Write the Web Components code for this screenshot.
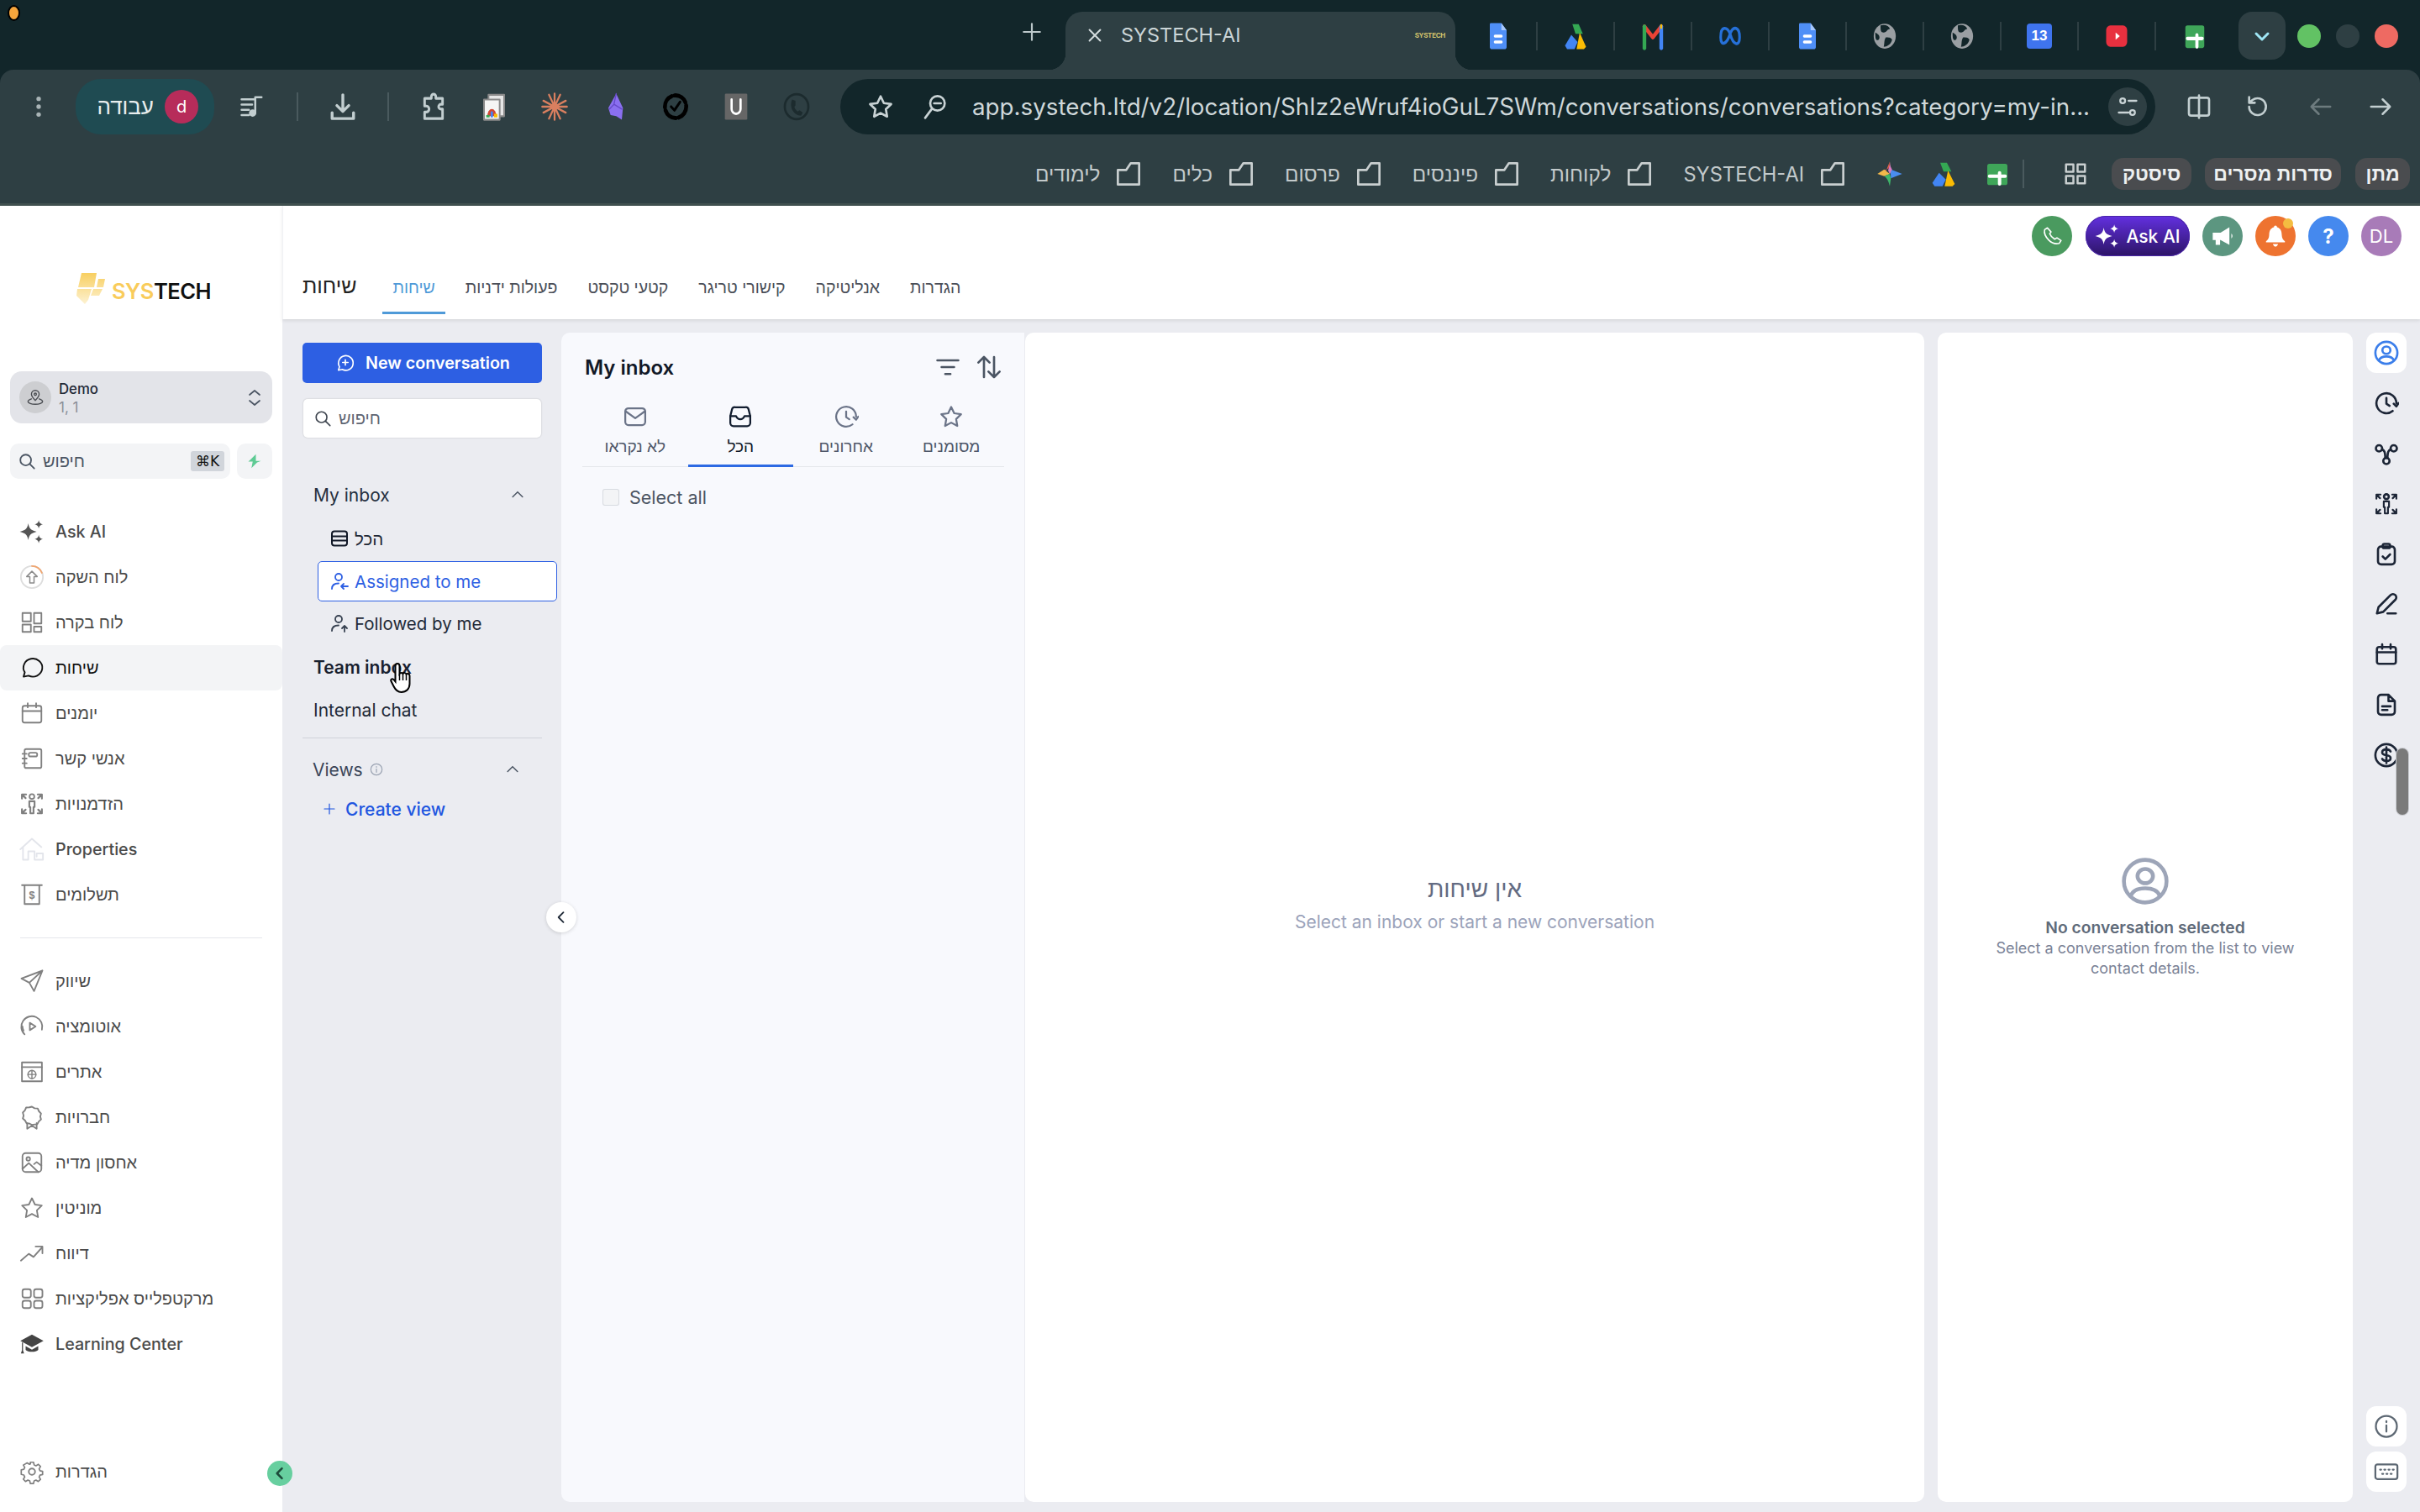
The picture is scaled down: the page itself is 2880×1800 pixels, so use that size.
<!DOCTYPE html>
<html lang="he">
<head>
<meta charset="utf-8">
<title>SYSTECH-AI</title>
<style>
	html, body { margin: 0; padding: 0; width: 2880px; height: 1800px; overflow: hidden; background: #ebecf1; }
	body { font-family: Inter, "Liberation Sans", sans-serif; display: flex; flex-direction: column; }
</style>
</head>
<body>
<browser-chrome></browser-chrome>
<app-shell></app-shell>
<script>
const ICONS = {
	sparkle: `<g fill="currentColor" stroke="none"><path d="M8.500 4C9.400 9 11 10.600 16.500 12 11 13.400 9.400 15 8.500 20 7.600 15 6 13.400.5 12 6 10.600 7.600 9 8.500 4Z"/><path d="M18.500 1C19 3.500 19.700 4.200 22.500 5 19.700 5.800 19 6.500 18.500 9 18 6.500 17.300 5.800 14.500 5 17.300 4.200 18 3.500 18.500 1Z"/><path d="M18.500 15C19 17.500 19.700 18.200 22.500 19 19.700 19.800 19 20.500 18.500 23 18 20.500 17.300 19.800 14.500 19 17.300 18.200 18 17.500 18.500 15Z"/></g>`,
	launch: `<circle cx="12" cy="12" r="10.500" stroke="#ddd"/><path d="M12 1.500A10.500 10.500 0 0 1 21.500 8" stroke="#f0a56f"/><path d="M12 6.500 7 11.500h3v6h4v-6h3z" stroke-width="1.200"/>`,
	dashboard: `<rect x="3" y="3" width="8" height="8"/><rect x="14" y="3" width="7" height="10"/><rect x="3" y="14" width="8" height="7"/><rect x="14" y="16" width="7" height="5"/>`,
	chat: `<path d="M4 20.500 5.200 16.300A9 8.600 0 1 1 8.800 19.500Z"/>`,
	calendar: `<rect x="3" y="5" width="18" height="16" rx="2"/><path d="M3 10h18M8 2.500v4M16 2.500v4"/>`,
	book: `<rect x="5" y="3" width="16" height="18" rx="1.500"/><rect x="9" y="6.500" width="8" height="3.500" rx="1.500"/><path d="M3 7.500h4M3 12h4M3 16.500h4"/>`,
	opps: `<circle cx="12" cy="5" r="2.300"/><path d="M9.500 9.500h5v5.500h-1V21h-3v-6h-1zM2.500 3v4M2.500 3h4M21.500 3v4M21.500 3h-4M2.500 21v-4M2.500 21h4M21.500 21v-4M21.500 21h-4M3 3.500l3 3M21 3.500l-3 3M3 20.500l3-3M21 20.500l-3-3" stroke-width="1.700"/>`,
	house: `<path d="M1 12 12 2l9 8M3.500 10v12h5v-8h6v8h8v-6h-6v3" stroke="#e3e5eb"/>`,
	bill: `<path d="M2.500 3h19M5 3v18h14V3"/><text x="12" y="16" font-size="10" font-weight="700" text-anchor="middle" fill="currentColor" stroke="none" font-family="Liberation Sans">$</text>`,
	send: `<path d="M22 2 2 9.500l7.500 4L14 21.500zM22 2 9.500 13.500"/>`,
	play: `<path d="M5 19.500A10 10 0 1 1 21.500 15"/><path d="M3 12a9 9 0 0 0 1 4M10 8.500v7l5.500-3.500z"/>`,
	web: `<rect x="2.500" y="3" width="19" height="18"/><path d="M2.500 7.500h19"/><circle cx="12" cy="14.500" r="3.800" stroke-width="1.200"/><path d="M8.200 14.500h7.600M12 10.700v7.600" stroke-width="1.100"/>`,
	award: `<path d="M12 2l2.500 1.500 3 .2 1.200 2.700 2 2.100-.8 2.900.8 2.700-2.200 2-1.400 2.600-2.600.2L12 19.300l-2.500-1.300-2.600-.2-1.400-2.600-2.200-2 .8-2.700-.8-2.900 2-2.100 1.200-2.700 3-.2z"/><path d="M7.500 17.500V23l4.500-3 4.500 3v-5.500"/>`,
	image: `<rect x="3" y="3" width="18" height="18" rx="3"/><circle cx="8.500" cy="8.500" r="1.700"/><path d="M3 18l6-5.500L18 21M14 13.500l2.500-2L21 15"/>`,
	star: `<path d="M12 2.800l2.900 6 6.500.9-4.700 4.600 1.100 6.500-5.800-3.100-5.800 3.100 1.100-6.500L2.600 9.700l6.500-.9z"/>`,
	trend: `<path d="M1.500 19l7.500-6.500 4.500 3L22 6M15.500 5.500H22V12" stroke-width="1.500"/>`,
	apps: `<rect x="3" y="3" width="8" height="8" rx="2"/><rect x="14" y="3" width="8" height="8" rx="2"/><rect x="3" y="14" width="8" height="7" rx="2"/><rect x="14" y="14" width="8" height="7" rx="2"/>`,
	grad: `<g fill="currentColor" stroke="none"><path d="M12 3 1 9l11 6 11-6z"/><path d="M6 14v3.500c2 2.500 10 2.500 12 0V14l-6 3.300zM2.500 10.500h1V18l1 3h-3l1-3z"/></g>`,
	gear: `<circle cx="12" cy="12" r="3"/><path d="M10.300 2.500h3.400l.6 2.800 2 .9 2.500-1.500 2.300 2.400-1.500 2.400.9 2 2.800.7v3.300l-2.800.6-.9 2 1.500 2.500-2.400 2.300-2.400-1.500-2 .9-.7 2.800h-3.300l-.6-2.800-2-.9-2.500 1.500-2.300-2.400 1.500-2.400-.9-2-2.800-.7V10.600l2.800-.6.9-2-1.500-2.500L7 3.200l2.400 1.500 1-.4z" transform="translate(12 12) scale(.9) translate(-12 -12.500)"/>`,
	search: `<circle cx="10.500" cy="10.500" r="7"/><path d="M16 16l5.500 5.500"/>`,
	pin: `<path d="M12 3a5 5 0 0 1 5 5c0 3-3 6-5 8-2-2-5-5-5-8a5 5 0 0 1 5-5z"/><circle cx="12" cy="8" r="1.500"/><path d="M7 14c-3 1-4.500 2.300-4.500 3.500C2.500 19.500 7 21 12 21s9.500-1.500 9.500-3.500c0-1.200-1.500-2.500-4.500-3.500"/>`,
	updown: `<path d="M6 9l6-5 6 5M6 16l6 5 6-5"/>`,
	up: `<path d="M5 15l7-7 7 7"/>`,
	left: `<path d="M15 5l-7 7 7 7"/>`,
	bolt: `<path fill="currentColor" stroke="none" d="M14 1 5 10 2 12.500h7L7 23l9-9 6-2.500h-8z"/>`,
	chatplus: `<path d="M3 21.500l1.400-4.500A9.500 9.500 0 1 1 8 20.500zM12 8v7M8.500 11.500h7"/>`,
	rows: `<rect x="3" y="3.500" width="18" height="17" rx="3"/><path d="M3 9.500h18M3 14.500h18"/>`,
	userin: `<circle cx="11" cy="7" r="4"/><path d="M3 21c0-4 3-6.500 8-6.500M22 18h-8M17 15l-3 3 3 3"/>`,
	userup: `<circle cx="11" cy="7" r="4"/><path d="M3 21c0-4 3-6.500 8-6.500M18 22v-7M15 18l3-3 3 3"/>`,
	info: `<circle cx="12" cy="12" r="10"/><path d="M12 11v6M12 7v1"/>`,
	plus: `<path d="M12 3v18M3 12h18"/>`,
	mail: `<rect x="2.500" y="4" width="19" height="16" rx="3"/><path d="M3 7l9 6.500L21 7"/>`,
	inbox: `<path d="M7 3h10a3 3 0 0 1 3 2.500l1.500 6V18a3 3 0 0 1-3 3H5.500a3 3 0 0 1-3-3v-6.500L4 5.500A3 3 0 0 1 7 3z"/><path d="M2.500 11.500H8c.8 2 2 3 4 3s3.200-1 4-3h5.500"/>`,
	recent: `<path d="M21.500 12A9.500 9.500 0 1 0 18 19.400"/><path d="M12 7v5.500l3 2M19 12.500l2.500 2.500 2-3"/>`,
	filter: `<path d="M2 5.500h20M6 12h12M9.500 18.500h5"/>`,
	sort: `<path d="M7.500 21V3M2.500 8l5-5 5 5M16.500 3v18M11.500 16l5 5 5-5"/>`,
	person: `<circle cx="12" cy="12" r="10.500"/><ellipse cx="12" cy="9.500" rx="3.800" ry="3.500"/><path d="M5 19c1-2.500 3.500-3.500 7-3.500s6 1 7 3.500"/>`,
	node: `<circle cx="5" cy="7" r="3"/><circle cx="19" cy="7" r="3"/><circle cx="12" cy="19" r="3"/><path d="M8 8c2 1 2.800 2 3 8.500M16 8c-2 1-2.800 2-3 8.500"/>`,
	clipboard: `<rect x="4" y="4.500" width="16" height="17" rx="3"/><rect x="8.500" y="2" width="7" height="4" rx="1.500"/><path d="M8.500 14l2.500 2.500 4.500-4.500"/>`,
	pen: `<path d="M3 21l1.500-6L16 3.500a2.500 2.500 0 0 1 4.500 4.500L9 19.500zM13 21h8"/>`,
	doc: `<path d="M14 2.500H7a3 3 0 0 0-3 3v13a3 3 0 0 0 3 3h10a3 3 0 0 0 3-3V8.500zM14 2.500v6h6M8 13.500h8M8 17h5"/>`,
	dollar: `<circle cx="12" cy="12" r="10.500"/><path d="M16 8.500c-.7-1.300-2-2-4-2-2.500 0-4 1-4 2.800 0 4 8 1.500 8 5.400 0 1.800-1.500 2.800-4 2.800-2 0-3.300-.7-4-2M12 4.500v15"/>`,
	keyboard: `<rect x="1.500" y="5" width="21" height="14" rx="2"/><path d="M6 10h1M10 10h1M14 10h1M18 10h1M8 14h1M12 14h1M16 14h1"/>`,
	phone: `<path d="M7 3 4 5c-1 4 1 8 4.500 11.500S16 21 20 20l2-3-4.500-3-2.500 1.500C12.500 14 10.500 12 9.500 9.500L11 7.500z" stroke-width="1.500"/>`,
	horn: `<path fill="currentColor" stroke="none" d="M2 8.500h8L19 3v18l-9-5H9.500v5H5v-5H2zM21 9.500c1.500 1 1.500 4 0 5z"/>`,
	bell: `<path fill="currentColor" stroke="none" d="M12 2a1.500 1.500 0 0 1 1.500 1.500C17 4.500 18 7.500 18 11c0 3 1.500 5 3 6v1H3v-1c1.500-1 3-3 3-6 0-3.500 1-6.500 4.500-7.500A1.500 1.500 0 0 1 12 2zM9.500 19.500h5C14 21 13 22 12 22s-2-1-2.500-2.500z"/>`,
	more: `<g fill="currentColor" stroke="none"><circle cx="12" cy="5" r="2"/><circle cx="12" cy="12" r="2"/><circle cx="12" cy="19" r="2"/></g>`,
	media: `<path d="M2 5h13M2 10h10M2 15h7M2 20h7M15 3v15M15 3h6"/><circle cx="12.500" cy="18" r="2.500" fill="currentColor"/>`,
	download: `<path d="M12 2v14M7 11l5 5 5-5M3 17v5h18v-5" stroke-width="2.400"/>`,
	puzzle: `<path d="M4 5h6V3.500a2 2 0 0 1 4 0V5h6v5h-1.500a2 2 0 0 0 0 4H20v8H4v-5.500h1.500a2.500 2.500 0 0 0 0-5H4z" stroke-width="2.200"/>`,
	zoomglass: `<circle cx="14" cy="9" r="6.500"/><path d="M9 14 3 22M11 9h6"/>`,
	tune: `<circle cx="7" cy="6" r="2.500"/><circle cx="17" cy="18" r="2.500"/><path d="M13 6h8M3 18h10"/>`,
	split: `<rect x="3" y="4" width="18" height="16" rx="2"/><path d="M12 2v20"/>`,
	reload: `<path d="M5 12a7.500 7.500 0 1 0 3-6l-3 2.500M5 3.500v5h5"/>`,
	back: `<path d="M21 12H3M10 5l-7 7 7 7"/>`,
	fwd: `<path d="M3 12h18M14 5l7 7-7 7"/>`,
	close: `<path d="M5 5l14 14M19 5 5 19"/>`,
	chevdown: `<path d="M5 9l7 7 7-7"/>`,
	folder: `<path d="M2.500 8.500h7.500l4-6h7.500V21.500H2.500z" stroke-linejoin="round"/>`,
	grid4: `<rect x="3" y="3" width="7" height="7"/><rect x="14" y="3" width="7" height="7"/><rect x="3" y="14" width="7" height="7"/><rect x="14" y="14" width="7" height="7"/>`,
	gdoc: `<path fill="#4f8ff7" stroke="none" d="M5 1h10l5 6v14a2 2 0 0 1-2 2H6a2 2 0 0 1-2-2V2a1 1 0 0 1 1-1z"/><path fill="#a8c8fb" stroke="none" d="M15 1l5 6h-5z"/><path stroke="#fff" stroke-width="2.500" d="M9 12h6M9 17h6"/>`,
	drive: `<path fill="#34a853" stroke="none" d="M9 2h6l4 8h-7z"/><path fill="#4285f4" stroke="none" d="M8 11 2 20l2 3h7l3-6z"/><path fill="#fbbc04" stroke="none" d="M16 9l6 12-2 2h-7z"/>`,
	gmail: `<path stroke="#ea4335" stroke-width="3.500" d="M4 4l8 9 8-9"/><path stroke="#34a853" stroke-width="3.500" d="M4 4v18"/><path stroke="#4285f4" stroke-width="3.500" d="M20 4v18"/><path stroke="#fbbc04" stroke-width="2" d="M20 3v2"/>`,
	meta: `<path stroke="#2670d8" stroke-width="2.500" d="M12 10C9 4 3 3 3 13c0 8 6 6 9-3 3-7 9-6 9 3 0 8-6 7-9-3z"/>`,
	globe: `<circle cx="12" cy="12" r="10.500" fill="#9a9fa3" stroke="none"/><path fill="#12262a" stroke="none" d="M8 3c4-1 8 0 9 3-3 0-3 3-6 3S8 7 8 3zM13 13c3 0 5 0 6 2-1 4-5 6-8 6 1-3 0-5 2-8zM3 9c2 1 4 2 4 4s-2 3-3 2-1-4-1-6z"/>`,
	yt: `<rect x="2" y="3" width="20" height="18" rx="4" fill="#e8303f" stroke="none"/><path fill="#fff" stroke="none" d="M11 9l4 3-4 3z"/>`,
	sheets: `<rect x="3" y="3" width="18" height="19" rx="2" fill="#3fa659" stroke="none"/><path stroke="#fff" stroke-width="3" d="M5 14h14M14 11v10"/>`,
	gemini: `<path fill="#e8604c" stroke="none" d="M12 1C12.700 6 13.500 9 12 12 10.500 9 11.300 6 12 1Z"/><path fill="#e8604c" stroke="none" d="M12 1 11 7 5 10 8 11z"/><path fill="#f2b84b" stroke="none" d="M12 12 7 8 1 12 7 14z"/><path fill="#4a8df0" stroke="none" d="M12 1 13 8 23 12 13 16z"/><path fill="#3fb56a" stroke="none" d="M7 14l5-2 1 4-1 7C11 18 9 15 7 14z"/><path fill="#d77ac0" stroke="none" d="M12 4l-1.500 5 1.500 3 2-4z"/>`,
	chromeapp: `<rect x="7" y="2" width="14" height="18" fill="#e6e6e6" stroke="#8a8a8a" stroke-width="1.500"/><rect x="3" y="6" width="14" height="17" fill="#f5f5f5" stroke="#8a8a8a" stroke-width="1.500"/><path fill="#d14836" stroke="none" d="M6 20a4 6 0 0 1 8 0z"/><path fill="#4285f4" stroke="none" d="M9 21h2v-5H9z"/><path fill="#34a853" stroke="none" d="M5 21h3v-2H5z"/><path fill="#fbbc04" stroke="none" d="M12 21h3v-3h-3z"/>`,
	burst: `<path stroke="#d97f5f" stroke-width="1.700" d="M12 1v22M7 2l10 20M17 2 7 22M2 7l20 10M22 7 2 17M1 12h22"/>`,
	crystal: `<path fill="#8a6ff0" stroke="none" d="M13 1l6 12-1 10-5-3-5-1-2-6z"/><path stroke="#6549c9" stroke-width="1" d="M13 1l-2 9 7 4M11 10l-4 4"/>`,
	cycle: `<circle cx="12" cy="12" r="9.500" stroke="#000" stroke-width="3.500" stroke-dasharray="12 2.500"/><path stroke="#000" stroke-width="2.200" d="M8 12l3 3 5-7"/>`,
	ublock: `<rect x="2" y="1" width="20" height="22" rx="1" fill="#666" stroke="none"/><path stroke="#fff" stroke-width="2" d="M8 6v8a4 4 0 0 0 8 0V6"/>`,
	whats: `<circle cx="12" cy="12" r="10.500" stroke="#1c2b2e" stroke-width="2"/><path fill="#1c2b2e" stroke="none" d="M8 6l3 1v4l-1 1c.5 2 1.500 3 3 4l1.500-1 3 2-1.500 2.500C10 19.500 5 13 8 6z"/>`,
};

class AppIcon extends HTMLElement {
	connectedCallback() {
		const size = this.getAttribute("size") || 24;
		const w = this.getAttribute("w") || size;
		const sw = this.getAttribute("sw") || 1.8;
		const color = this.getAttribute("color") || "currentColor";
		this.attachShadow({ mode: "open" }).innerHTML = `
			<style>
				:host { display: inline-flex; flex: none; color: ${color}; }
				svg { display: block; fill: none; stroke: currentColor; stroke-linecap: round; stroke-linejoin: round; }
			</style>
			<svg width="${w}" height="${size}" viewBox="0 0 24 24" preserveAspectRatio="none" stroke-width="${sw}">${ICONS[this.getAttribute("name")] || ""}</svg>
		`;
	}
}
customElements.define("app-icon", AppIcon);

class BrowserChrome extends HTMLElement {
	connectedCallback() {
		const pinned = ["gdoc", "drive", "gmail", "meta", "gdoc", "globe", "globe", "cal", "yt", "sheets"];
		const slots = pinned.map((n, i) => `
			<div class="pin ${i < 9 ? "sep" : ""}">
				${n === "cal" ? `<span class="cal">13</span>` : `<app-icon name="${n}" size="34" w="30"></app-icon>`}
			</div>`).join("");
		const exts = [["puzzle", 72, "#c2ced0"], ["chromeapp", 72], ["burst", 72], ["crystal", 72], ["cycle", 72], ["ublock", 72], ["whats", 72]];
		const extSlots = exts.map(([n, w, c]) => `<div class="slot" style="width:${w}px"><app-icon name="${n}" size="34" w="32" ${c ? `color="${c}"` : ""}></app-icon></div>`).join("");
		const folders = ["לימודים", "כלים", "פרסום", "פיננסים", "לקוחות"];
		const folderIcon = `<app-icon name="folder" size="32" w="32" color="#c9cfd0" sw="2"></app-icon>`;
		const marks = folders.map(t => `<span class="mark"><span>${t}</span>${folderIcon}</span>`).join("");
		this.attachShadow({ mode: "open" }).innerHTML = `
			<style>
				:host { display: block; height: 245px; flex: none; background: #12262a; color: #cbd5d7; font-family: Inter, "Liberation Sans", sans-serif; }
				.strip { height: 83px; display: flex; align-items: flex-start; padding-right: 26px; box-sizing: border-box; }
				.dot { width: 11px; height: 15px; border-radius: 50%; background: #f6a53c; border: 2px solid #000; margin: 6px 0 0 9px; }
				.plus { margin: 25px 27px 0 auto; display: flex; }
				.tab { position: relative; width: 464px; height: 69px; margin-top: 14px; background: #2e3f43; border-radius: 20px 20px 0 0; display: flex; align-items: center; box-sizing: border-box; padding: 0 20px 14px 24px; font-size: 23.500px; }
				.tab::before, .tab::after { content: ""; position: absolute; bottom: 0; width: 20px; height: 20px; }
				.tab::before { left: -20px; background: radial-gradient(circle at 0 0, transparent 20px, #2e3f43 20.500px); }
				.tab::after { right: -20px; background: radial-gradient(circle at 100% 0, transparent 20px, #2e3f43 20.500px); }
				.title { margin-left: 20px; flex: 1; white-space: nowrap; }
				.fav { font-size: 8px; color: #d4c46c; font-weight: 700; letter-spacing: -.3px; margin-right: -8px; }
				.pins { display: flex; margin-left: 6px; margin-top: 26px; }
				.pin { width: 92px; height: 34px; display: flex; align-items: center; justify-content: center; box-sizing: border-box; }
				.pin.sep { border-right: 2px solid #2e3f43; }
				.cal { width: 30px; height: 30px; background: #3f74ee; border-radius: 4px; color: #fff; font: 700 17px "Liberation Sans", sans-serif; display: flex; align-items: center; justify-content: center; }
				.more { width: 56px; height: 57px; margin: 14px 0 0 6px; background: #2e3f43; border-radius: 16px; display: flex; align-items: center; justify-content: center; }
				.lights { display: flex; gap: 18px; margin: 29px 0 0 14px; }
				.lights i { width: 28px; height: 28px; border-radius: 50%; }
				.bar { height: 162px; background: #2e3f43; border-radius: 16px 16px 0 0; box-sizing: border-box; padding-top: 11px; border-bottom: 3px solid #40504f; }
				.row { display: flex; align-items: center; height: 66px; }
				.slot { display: flex; align-items: center; justify-content: center; flex: none; height: 40px; }
				.vline { width: 36px; display: flex; justify-content: center; }
				.vline i { width: 2px; height: 34px; background: #4a5a5e; }
				.profile { width: 165px; height: 66px; margin: 0 9px 0 24px; border-radius: 30px; background: #1f4b52; display: flex; align-items: center; justify-content: flex-end; box-sizing: border-box; padding-right: 19px; gap: 13px; font-size: 26px; color: #e8eeee; }
				.avatar { width: 40px; height: 40px; border-radius: 50%; background: #b72c5a; display: flex; align-items: center; justify-content: center; font-size: 20px; color: #fff; }
				.omni { width: 1565px; height: 66px; margin-left: 16px; background: #12262a; border-radius: 33px; display: flex; align-items: center; box-sizing: border-box; padding-left: 32px; position: relative; }
				.url { font: 400 27.750px Inter, sans-serif; margin-left: 28px; white-space: nowrap; color: #cfd8da; }
				.star { margin-right: 33px; display: flex; }
				.chip-btn { position: absolute; right: 10px; top: 10px; width: 46px; height: 46px; border-radius: 50%; background: #2e3f43; display: flex; align-items: center; justify-content: center; }
				.marks { display: flex; align-items: center; height: 40px; margin-top: 27px; padding-left: 1232px; font-size: 24.300px; color: #c3cacb; }
				.mark { display: inline-flex; align-items: center; gap: 18px; margin-right: 36px; white-space: nowrap; flex: none; }
				.chip { height: 38px; flex: none; background: #4a4c4f; border-radius: 14px; display: flex; align-items: center; justify-content: center; font-weight: 700; font-size: 23px; color: #eef0f0; font-family: "Liberation Sans", sans-serif; white-space: nowrap; }
				.mini { display: flex; width: 64px; justify-content: center; flex: none; }
			</style>
			<div class="strip">
				<span class="dot"></span>
				<span class="plus"><app-icon name="plus" size="26" color="#bcc8ca" sw="2"></app-icon></span>
				<div class="tab">
					<app-icon name="close" size="22" color="#d4dcdd" sw="2.200"></app-icon>
					<span class="title">SYSTECH-AI</span>
					<span class="fav">SYSTECH</span>
				</div>
				<div class="pins">${slots}</div>
				<div class="more"><app-icon name="chevdown" size="24" color="#9fe6f5" sw="3"></app-icon></div>
				<div class="lights"><i style="background:#62c264"></i><i style="background:#2e3f43"></i><i style="background:#ee6a62"></i></div>
			</div>
			<div class="bar">
				<div class="row">
					<div class="slot" style="width:40px;margin-left:26px"><app-icon name="more" size="32" color="#a9b4b6"></app-icon></div>
					<div class="profile"><span>עבודה</span><span class="avatar">d</span></div>
					<div class="slot" style="width:72px"><app-icon name="media" size="30" color="#c2ced0" sw="2"></app-icon></div>
					<div class="vline"><i></i></div>
					<div class="slot" style="width:72px"><app-icon name="download" size="34" color="#c2ced0"></app-icon></div>
					<div class="vline"><i></i></div>
					${extSlots}
					<div class="omni">
						<span class="star"><app-icon name="star" size="32" color="#c9d3d5" sw="2"></app-icon></span>
						<app-icon name="zoomglass" size="32" color="#c9d3d5" sw="2"></app-icon>
						<span class="url">app.systech.ltd/v2/location/ShIz2eWruf4ioGuL7SWm/conversations/conversations?category=my-in...</span>
						<span class="chip-btn"><app-icon name="tune" size="28" color="#c9d3d5" sw="2"></app-icon></span>
					</div>
					<div class="slot" style="width:70px;margin-left:17px"><app-icon name="split" size="32" color="#c2ced0" sw="2"></app-icon></div>
					<div class="slot" style="width:68px"><app-icon name="reload" size="32" color="#c2ced0" sw="2"></app-icon></div>
					<div class="slot" style="width:84px"><app-icon name="back" size="30" color="#6d7b7e" sw="2"></app-icon></div>
					<div class="slot" style="width:58px"><app-icon name="fwd" size="30" color="#c2ced0" sw="2"></app-icon></div>
				</div>
				<div class="marks">
					${marks}
					<span class="mark" style="font-size:23.700px;margin-right:20px"><span>SYSTECH-AI</span>${folderIcon}</span>
					<span class="mini"><app-icon name="gemini" size="32"></app-icon></span>
					<span class="mini"><app-icon name="drive" size="32"></app-icon></span>
					<span class="mini"><app-icon name="sheets" size="32"></app-icon></span>
					<span class="vline" style="width:2px;margin-left:-2px"><i></i></span>
					<span class="mini" style="margin-left:29px"><app-icon name="grid4" size="30" color="#c9cfd0" sw="2"></app-icon></span>
					<span class="chip" style="margin-left:11px;width:95px">סיסטק</span>
					<span class="chip" style="margin-left:16px;width:162px">סדרות מסרים</span>
					<span class="chip" style="margin-left:17px;width:65px">מתן</span>
				</div>
			</div>
		`;
	}
}
customElements.define("browser-chrome", BrowserChrome);

class NavItem extends HTMLElement {
	connectedCallback() {
		const color = this.hasAttribute("active") ? "#111" : (this.getAttribute("icon-color") || "#808080");
		this.attachShadow({ mode: "open" }).innerHTML = `
			<style>
				:host { display: flex; align-items: center; height: 54px; box-sizing: border-box; padding-left: 23px; gap: 13px; font-size: 20px; color: #4b4b4b; font-family: Inter, "Liberation Sans", sans-serif; border-radius: 8px; white-space: nowrap; }
				:host([active]) { background: #f3f4f6; color: #111; }
				:host([latin]) { font-weight: 500; font-size: 19.700px; }
			</style>
			<app-icon name="${this.getAttribute("icon")}" size="30" color="${color}" sw="1.500"></app-icon>
			<slot></slot>
		`;
	}
}
customElements.define("nav-item", NavItem);

class SideNav extends HTMLElement {
	connectedCallback() {
		this.attachShadow({ mode: "open" }).innerHTML = `
			<style>
				:host { display: flex; flex-direction: column; width: 336px; flex: none; height: 100%; background: #fff; box-sizing: border-box; padding-bottom: 21px; position: relative; }
				.logo { height: 197px; box-sizing: border-box; padding: 80px 0 0 91px; display: flex; align-items: flex-start; gap: 8px; }
				.logo b { font: 600 25.500px Inter, sans-serif; margin-top: 5px; letter-spacing: -.5px; color: #111; line-height: 34px; }
				.logo b span { color: #f9cc5b; }
				.loc { height: 62px; margin: 0 12px; border-radius: 14px; background: #e3e4e9; display: flex; align-items: center; padding: 0 9px 0 11px; gap: 9px; }
				.loc .circle { width: 38px; height: 38px; border-radius: 50%; background: #cdced1; display: flex; align-items: center; justify-content: center; }
				.loc .txt { flex: 1; font-size: 16.800px; line-height: 22px; color: #1f2937; font-weight: 500; padding-top: 2px; }
				.loc .txt small { display: block; font-size: 17px; color: #8b8f98; font-weight: 400; }
				.find { display: flex; gap: 8px; margin: 24px 12px 0; height: 42px; }
				.box { background: #f3f4f6; border-radius: 10px; display: flex; align-items: center; }
				.box.q { flex: 1; padding: 0 7px 0 9px; gap: 8px; font-size: 20px; color: #4b5563; }
				.box.q span { flex: 1; }
				kbd { width: 40px; height: 24px; background: #d1d5db; border-radius: 3px; color: #111; font: 500 17px "DejaVu Sans", sans-serif; display: flex; align-items: center; justify-content: center; }
				.box.b { width: 42px; justify-content: center; }
				.list { margin-top: 36px; }
				hr { border: 0; border-top: 1px solid #e5e7eb; margin: 24px 24px; }
				.end { margin-top: auto; }
				.toggle { position: absolute; left: 318px; top: 1494px; width: 30px; height: 30px; border-radius: 50%; background: #67cf9f; display: flex; align-items: center; justify-content: center; z-index: 3; }
			</style>
			<div class="logo">
				<svg width="34" height="37" viewBox="0 0 34 37">
					<defs><linearGradient id="lg" x1="0" y1="0" x2="0" y2="1"><stop offset="0" stop-color="#f8cf60"/><stop offset="1" stop-color="#fdf2d2"/></linearGradient></defs>
					<path fill="url(#lg)" d="M6 0h18l-3 17H2zM26 7h8l-2 10h-8zM1 19h17l-4 13-4 5-10-10zM20 19h11l-4 8H17z"/>
				</svg>
				<b><span>SYS</span>TECH</b>
			</div>
			<div class="loc">
				<span class="circle"><app-icon name="pin" size="22" color="#4a4d52" sw="1.500"></app-icon></span>
				<span class="txt">Demo<small>1, 1</small></span>
				<app-icon name="updown" size="24" color="#4b5563" sw="1.700"></app-icon>
			</div>
			<div class="find">
				<div class="box q">
					<app-icon name="search" size="22" color="#4b5563" sw="2"></app-icon>
					<span>חיפוש</span>
					<kbd>⌘K</kbd>
				</div>
				<div class="box b"><app-icon name="bolt" size="18" color="#5ecb94"></app-icon></div>
			</div>
			<div class="list">
				<nav-item icon="sparkle" latin icon-color="#555">Ask AI</nav-item>
				<nav-item icon="launch" icon-color="#8a8a8a">לוח השקה</nav-item>
				<nav-item icon="dashboard">לוח בקרה</nav-item>
				<nav-item icon="chat" active>שיחות</nav-item>
				<nav-item icon="calendar">יומנים</nav-item>
				<nav-item icon="book">אנשי קשר</nav-item>
				<nav-item icon="opps">הזדמנויות</nav-item>
				<nav-item icon="house" latin icon-color="#e3e5eb">Properties</nav-item>
				<nav-item icon="bill">תשלומים</nav-item>
			</div>
			<hr>
			<div>
				<nav-item icon="send">שיווק</nav-item>
				<nav-item icon="play">אוטומציה</nav-item>
				<nav-item icon="web">אתרים</nav-item>
				<nav-item icon="award">חברויות</nav-item>
				<nav-item icon="image">אחסון מדיה</nav-item>
				<nav-item icon="star">מוניטין</nav-item>
				<nav-item icon="trend">דיווח</nav-item>
				<nav-item icon="apps">מרקטפלייס אפליקציות</nav-item>
				<nav-item icon="grad" latin icon-color="#444">Learning Center</nav-item>
			</div>
			<div class="end"><nav-item icon="gear">הגדרות</nav-item></div>
			<span class="toggle"><app-icon name="left" size="20" color="#1c4a3a" sw="3"></app-icon></span>
		`;
	}
}
customElements.define("side-nav", SideNav);

class TopBar extends HTMLElement {
	connectedCallback() {
		const tabs = [["שיחות", 1], ["פעולות ידניות"], ["קטעי טקסט"], ["קישורי טריגר"], ["אנליטיקה"], ["הגדרות"]];
		this.attachShadow({ mode: "open" }).innerHTML = `
			<style>
				:host { display: block; height: 135px; flex: none; background: #fff; box-shadow: 0 2px 4px rgba(0,0,0,.09); position: relative; z-index: 1; box-sizing: border-box; border-left: 1px solid #f0f1f4; font-family: Inter, "Liberation Sans", sans-serif; }
				.actions { display: flex; justify-content: flex-end; gap: 15px; padding: 12px 22px 0 0; height: 60px; box-sizing: border-box; }
				.round { width: 48px; height: 48px; border-radius: 50%; display: flex; align-items: center; justify-content: center; color: #fff; position: relative; font-size: 24px; }
				.ask { width: 124px; height: 48px; border-radius: 24px; background: linear-gradient(#6330e0, #2c1466); color: #fff; display: flex; align-items: center; justify-content: center; gap: 7px; font-size: 21px; font-weight: 500; box-shadow: inset 0 0 0 1px #4a25a8; }
				.badge { position: absolute; width: 12px; height: 12px; border-radius: 50%; background: #f4bd41; top: 3px; right: 3px; }
				.tabs { display: flex; align-items: center; height: 75px; padding-left: 23px; }
				h1 { font: 500 25px "Liberation Sans", sans-serif; color: #222; margin: 0 31px 0 0; padding-bottom: 4px; }
				.tab { height: 63px; display: flex; align-items: center; justify-content: center; padding: 2px 12px 0; margin-right: 12px; font: 400 19.500px "Liberation Sans", sans-serif; color: #4b4f58; border-bottom: 3px solid transparent; white-space: nowrap; box-sizing: border-box; }
				.tab.on { color: #4f9ad8; border-color: #4f9ad8; }
			</style>
			<div class="actions">
				<span class="round" style="background:#4a9a5f;margin-right:1px"><app-icon name="phone" size="26" sw="1.500"></app-icon></span>
				<span class="ask"><app-icon name="sparkle" size="30"></app-icon>Ask AI</span>
				<span class="round" style="background:#5c9680"><app-icon name="horn" size="28"></app-icon></span>
				<span class="round" style="background:#ee7330"><app-icon name="bell" size="30"></app-icon><i class="badge"></i></span>
				<span class="round" style="background:#4589ee;font-weight:700">?</span>
				<span class="round" style="background:#a87bb8;font-size:22px">DL</span>
			</div>
			<div class="tabs">
				<h1>שיחות</h1>
				${tabs.map(t => `<span class="tab ${t[1] ? "on" : ""}">${t[0]}</span>`).join("")}
			</div>
		`;
	}
}
customElements.define("top-bar", TopBar);

class InboxMenu extends HTMLElement {
	connectedCallback() {
		this.attachShadow({ mode: "open" }).innerHTML = `
			<style>
				:host { display: block; width: 332px; flex: none; box-sizing: border-box; padding: 12px 23px 0 24px; font-family: Inter, "Liberation Sans", sans-serif; color: #1f2937; }
				.new { height: 48px; width: 285px; background: #2d5fe3; color: #fff; border-radius: 5px; display: flex; align-items: center; justify-content: center; gap: 13px; font-size: 19.700px; font-weight: 600; padding-left: 2px; box-sizing: border-box; }
				.q { height: 46px; width: 283px; margin: 19px 1px 0; background: #fff; border-radius: 5px; box-shadow: 0 0 2px rgba(0,0,0,.22); display: flex; align-items: center; padding-left: 12px; gap: 8px; box-sizing: border-box; font-size: 20px; color: #5f6673; }
				.head { height: 40px; margin-top: 48px; display: flex; align-items: center; justify-content: space-between; padding: 0 19px 0 13px; font-size: 21px; color: #263040; white-space: nowrap; }
				.rowi { height: 46px; margin-left: 18px; width: 285px; box-sizing: border-box; display: flex; align-items: center; padding-left: 13px; gap: 6px; font-size: 20.500px; border: 1px solid transparent; border-radius: 5px; white-space: nowrap; color: #1f2937; }
				.rowi.on { border-color: #2d5fe3; background: #fff; color: #2d5fe3; height: 48px; }
				.plain { height: 50px; display: flex; align-items: center; padding-left: 13px; font-size: 21px; white-space: nowrap; }
				hr { border: 0; border-top: 1px solid #cfd2d9; margin: 8px 0 0; }
				.views { color: #3b4558; margin-top: 17px; padding: 0 25px 0 12px; }
				.views span { display: flex; align-items: center; gap: 8px; }
				.create { display: flex; align-items: center; gap: 11px; padding-left: 24px; margin-top: 7px; height: 40px; color: #2156e0; font-size: 21px; font-weight: 500; }
			</style>
			<div class="new"><app-icon name="chatplus" size="22"></app-icon>New conversation</div>
			<div class="q"><app-icon name="search" size="22" color="#3f4650"></app-icon>חיפוש</div>
			<div class="head">My inbox<app-icon name="up" size="20" color="#4b5563"></app-icon></div>
			<div class="rowi" style="height:38px;margin-top:13px;margin-bottom:8px"><app-icon name="rows" size="24" color="#111827" sw="2"></app-icon>הכל</div>
			<div class="rowi on"><app-icon name="userin" size="24" color="#2d5fe3"></app-icon>Assigned to me</div>
			<div class="rowi" style="margin-top:3px"><app-icon name="userup" size="24" color="#374151"></app-icon>Followed by me</div>
			<div class="plain" style="font-weight:600;margin-top:4px;color:#18202e">Team inbox</div>
			<div class="plain" style="margin-top:1px">Internal chat</div>
			<hr>
			<div class="head views"><span>Views<app-icon name="info" size="16" color="#9aa3b2" sw="1.800"></app-icon></span><app-icon name="up" size="20" color="#4b5563"></app-icon></div>
			<div class="create"><app-icon name="plus" size="16" color="#2156e0"></app-icon>Create view</div>
		`;
	}
}
customElements.define("inbox-menu", InboxMenu);

class ConvList extends HTMLElement {
	connectedCallback() {
		const tabs = [["mail", "לא נקראו", "#6b7488"], ["inbox", "הכל", "#111c2e", 1], ["recent", "אחרונים", "#6b7488"], ["star", "מסומנים", "#6b7488"]];
		this.attachShadow({ mode: "open" }).innerHTML = `
			<style>
				:host { display: block; width: 551px; flex: none; background: #f8f9fd; border-radius: 10px 0 0 10px; box-sizing: border-box; padding: 0 24px 0 25px; font-family: Inter, "Liberation Sans", sans-serif; }
				.head { height: 82px; display: flex; align-items: center; padding: 0 2px 0 3px; gap: 18px; }
				.head b { flex: 1; font-size: 24px; font-weight: 600; color: #111827; }
				.tabs { display: grid; grid-template-columns: repeat(4, 1fr); height: 77px; border-bottom: 1px solid #e5e7eb; }
				.t { display: flex; flex-direction: column; align-items: center; gap: 10px; padding-top: 3px; font: 400 19px "Liberation Sans", sans-serif; color: #4f5769; box-sizing: border-box; margin-bottom: -1px; border-bottom: 3px solid transparent; height: 78px; }
				.t.on { color: #111827; border-color: #2d6ae3; }
				.all { display: flex; align-items: center; gap: 12px; padding-left: 24px; height: 72px; font-size: 21.500px; color: #4b5563; }
				.all i { width: 20px; height: 20px; border-radius: 3px; background: #f3f4f6; box-shadow: inset 0 0 0 1px #d8dbe1; }
			</style>
			<div class="head">
				<b>My inbox</b>
				<app-icon name="filter" size="30" color="#4b5563" sw="2"></app-icon>
				<app-icon name="sort" size="32" color="#4b5563" sw="2"></app-icon>
			</div>
			<div class="tabs">
				${tabs.map(t => `<div class="t ${t[3] ? "on" : ""}"><app-icon name="${t[0]}" size="30" color="${t[2]}" sw="1.800"></app-icon><span>${t[1]}</span></div>`).join("")}
			</div>
			<div class="all"><i></i>Select all</div>
		`;
	}
}
customElements.define("conv-list", ConvList);

class EmptyMain extends HTMLElement {
	connectedCallback() {
		this.attachShadow({ mode: "open" }).innerHTML = `
			<style>
				:host { display: flex; flex-direction: column; align-items: center; justify-content: center; width: 1070px; flex: none; margin-left: 1px; background: #fff; border-radius: 10px; box-sizing: border-box; padding-bottom: 31px; font-family: Inter, "Liberation Sans", sans-serif; }
				h2 { font: 400 28px "Liberation Sans", sans-serif; color: #636b82; margin: 0 0 10px; }
				p { margin: 0; font-size: 21px; color: #9ba3ba; }
			</style>
			<h2>אין שיחות</h2>
			<p>Select an inbox or start a new conversation</p>
		`;
	}
}
customElements.define("empty-main", EmptyMain);

class ContactPanel extends HTMLElement {
	connectedCallback() {
		this.attachShadow({ mode: "open" }).innerHTML = `
			<style>
				:host { display: flex; flex-direction: column; align-items: center; justify-content: center; width: 494px; flex: none; margin-left: 16px; background: #fff; border-radius: 10px; box-sizing: border-box; padding: 0 60px; text-align: center; font-family: Inter, "Liberation Sans", sans-serif; }
				b { font-size: 19.300px; font-weight: 600; color: #5f6b7a; margin-top: 13px; line-height: 26px; }
				p { margin: 0; font-size: 18px; line-height: 24px; color: #7a8296; }
			</style>
			<app-icon name="person" size="58" color="#9da5b8" sw="1.900"></app-icon>
			<b>No conversation selected</b>
			<p>Select a conversation from the list to view contact details.</p>
		`;
	}
}
customElements.define("contact-panel", ContactPanel);

class IconRail extends HTMLElement {
	connectedCallback() {
		const top = ["person", "recent", "node", "opps", "clipboard", "pen", "calendar", "doc", "dollar"];
		this.attachShadow({ mode: "open" }).innerHTML = `
			<style>
				:host { display: flex; flex-direction: column; align-items: center; width: 80px; flex: none; box-sizing: border-box; padding: 0 16px 12px; position: relative; }
				.b { width: 48px; height: 48px; flex: none; border-radius: 12px; display: flex; align-items: center; justify-content: center; margin-bottom: 11.900px; }
				.b.on { background: #fff; }
				.end { margin-top: auto; }
				.b.w { background: #fff; margin-bottom: 6px; }
				.thumb { position: absolute; left: 52px; top: 495px; width: 14px; height: 79px; border-radius: 7px; background: #7a7a7a; box-shadow: 0 0 0 1px #c9cbd0; }
			</style>
			${top.map((n, i) => `<span class="b ${i ? "" : "on"}"><app-icon name="${n}" size="30" color="${i ? "#1c2536" : "#3b7eea"}" sw="2.100"></app-icon></span>`).join("")}
			<span class="b w end"><app-icon name="info" size="30" color="#5d6873" sw="1.800"></app-icon></span>
			<span class="b w" style="margin:0"><app-icon name="keyboard" size="30" color="#5d6873" sw="1.800"></app-icon></span>
			<i class="thumb"></i>
		`;
	}
}
customElements.define("icon-rail", IconRail);

class AppShell extends HTMLElement {
	connectedCallback() {
		this.attachShadow({ mode: "open" }).innerHTML = `
			<style>
				:host { display: flex; height: 1555px; flex: none; background: #ebecf1; position: relative; }
				.right { flex: 1; display: flex; flex-direction: column; min-width: 0; }
				.work { flex: 1; display: flex; position: relative; padding: 16px 0 12px; min-height: 0; }
				.handle { position: absolute; left: 314px; top: 694px; width: 36px; height: 36px; border-radius: 50%; background: #fff; box-shadow: 0 1px 4px rgba(0,0,0,.15); display: flex; align-items: center; justify-content: center; }
				.hand { position: absolute; left: 464px; top: 542px; z-index: 5; }
			</style>
			<side-nav></side-nav>
			<div class="right">
				<top-bar></top-bar>
				<div class="work">
					<inbox-menu></inbox-menu>
					<conv-list></conv-list>
					<empty-main></empty-main>
					<contact-panel></contact-panel>
					<icon-rail></icon-rail>
					<span class="handle"><app-icon name="left" size="20" color="#1f2937" sw="2.200"></app-icon></span>
				</div>
			</div>
			<svg class="hand" width="32" height="40" viewBox="0 0 32 40">
				<path d="M9 3c2 0 2.500 1 2.500 3v9c1-1.500 3.500-1.500 4 0 1-1.500 3.500-1 4 .5 1.500-1 4-.3 4 2V27c0 6-4 10-10 10-5 0-7-3-9-7l-3-6c-1-2 1-3.500 3-2l2 2.500V6c0-2 .5-3 2.500-3z" fill="#fff" stroke="#000" stroke-width="2"/>
				<path d="M11.500 15v8M15.500 15v8M19.500 16v7" stroke="#000" stroke-width="1.500"/>
			</svg>
		`;
	}
}
customElements.define("app-shell", AppShell);
</script>
</body>
</html>
